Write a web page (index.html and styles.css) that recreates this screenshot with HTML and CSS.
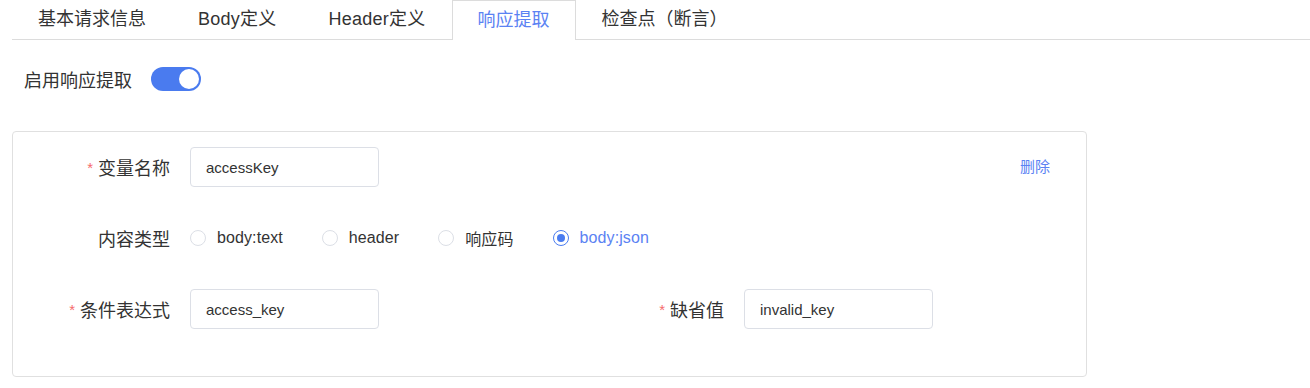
FILE: index.html
```html
<!DOCTYPE html>
<html lang="zh-CN">
<head>
    <meta charset="UTF-8">
    <title>响应提取</title>
    <link rel="stylesheet" href="styles.css">
</head>
<body>
    <div class="tabs">
        <div class="tab">基本请求信息</div>
        <div class="tab latin">Body定义</div>
        <div class="tab latin">Header定义</div>
        <div class="tab active">响应提取</div>
        <div class="tab">检查点（断言）</div>
    </div>

    <div class="enable-row">
        <span class="enable-label">启用响应提取</span>
        <span class="switch"><span class="switch-knob"></span></span>
    </div>

    <div class="card">
        <div class="form-row">
            <label class="form-label"><span class="required">*</span>变量名称</label>
            <input class="form-input" type="text" value="accessKey">
            <a class="delete-link" href="#">删除</a>
        </div>

        <div class="form-row">
            <label class="form-label">内容类型</label>
            <div class="radio-group">
                <span class="radio"><span class="radio-circle"></span><span class="radio-text">body:text</span></span>
                <span class="radio"><span class="radio-circle"></span><span class="radio-text">header</span></span>
                <span class="radio"><span class="radio-circle"></span><span class="radio-text">响应码</span></span>
                <span class="radio checked"><span class="radio-circle"></span><span class="radio-text">body:json</span></span>
            </div>
        </div>

        <div class="form-row">
            <div class="form-field">
                <label class="form-label"><span class="required">*</span>条件表达式</label>
                <input class="form-input" type="text" value="access_key">
            </div>
            <div class="form-field">
                <label class="form-label"><span class="required">*</span>缺省值</label>
                <input class="form-input" type="text" value="invalid_key">
            </div>
        </div>
    </div>
</body>
</html>
```

FILE: styles.css
```css
* {
    margin: 0;
    padding: 0;
    box-sizing: border-box;
}

body {
    font-family: 'Liberation Sans', 'Noto Sans CJK SC', sans-serif;
    color: #333;
    background: #fff;
}

.tabs {
    display: flex;
    margin-left: 12px;
    height: 40px;
    border-bottom: 1px solid #dcdcdc;
}

.tab {
    padding: 0 26px;
    height: 39px;
    line-height: 39px;
    font-size: 18px;
    color: #333;
    white-space: nowrap;
}

.tab.latin {
    letter-spacing: 0.25px;
}

.tab.active {
    height: 40px;
    line-height: 38px;
    border: 1px solid #dcdcdc;
    border-bottom: none;
    background: #fff;
    color: #5b82f3;
    padding: 0 25px;
    margin-bottom: -1px;
}

.enable-row {
    display: flex;
    align-items: center;
    padding-left: 24px;
    margin-top: 27px;
    height: 24px;
}

.enable-label {
    font-size: 18px;
    margin-right: 19px;
}

.switch {
    display: flex;
    justify-content: flex-end;
    align-items: center;
    width: 50px;
    height: 24px;
    padding: 2px;
    border-radius: 12px;
    background: #4a7bef;
}

.switch-knob {
    width: 20px;
    height: 20px;
    border-radius: 50%;
    background: #fff;
}

.card {
    margin: 40px 0 0 12px;
    width: 1075px;
    padding: 15px 0 16px;
    border: 1px solid #e0e0e0;
    border-radius: 4px;
}

.form-row {
    display: flex;
    align-items: center;
    height: 40px;
    margin-bottom: 31px;
}

.form-field {
    display: flex;
    align-items: center;
    flex: 1;
}

.form-field:first-child {
    flex: 0 0 554px;
}

.form-label {
    width: 157px;
    margin-right: 20px;
    text-align: right;
    font-size: 18px;
    color: #333;
    white-space: nowrap;
}

.required {
    color: #f56c6c;
    font-size: 15px;
    margin-right: 5px;
    vertical-align: 2px;
}

.form-input {
    width: 189px;
    height: 40px;
    padding: 0 15px;
    border: 1px solid #dcdfe6;
    border-radius: 4px;
    font-family: inherit;
    font-size: 15px;
    color: #333;
    outline: none;
}

.delete-link {
    margin-left: auto;
    margin-right: 36px;
    margin-top: -4px;
    font-size: 15px;
    color: #5b82f3;
    text-decoration: none;
}

.radio-group {
    display: flex;
    align-items: center;
}

.radio {
    display: inline-flex;
    align-items: center;
    margin-right: 39px;
}

.radio-circle {
    display: flex;
    align-items: center;
    justify-content: center;
    width: 16px;
    height: 16px;
    border: 1px solid #dcdfe6;
    border-radius: 50%;
    background: #fff;
}

.radio-text {
    margin-left: 11px;
    font-size: 16px;
    letter-spacing: 0.1px;
    color: #333;
}

.radio.checked .radio-circle {
    border-color: #4a7cf0;
}

.radio.checked .radio-circle::after {
    content: '';
    width: 8px;
    height: 8px;
    border-radius: 50%;
    background: #4a7cf0;
}

.radio.checked .radio-text {
    color: #5b82f3;
}
```
